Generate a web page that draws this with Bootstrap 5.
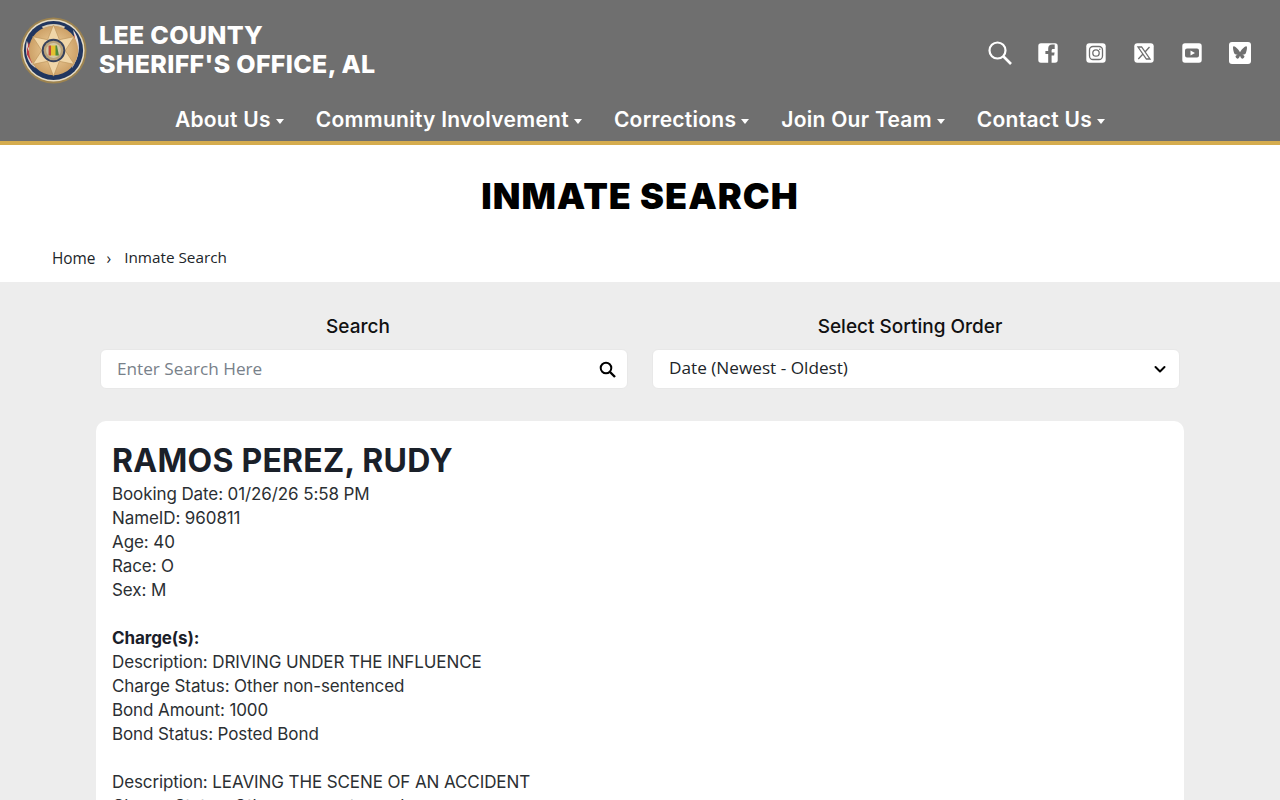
<!DOCTYPE html>
<html lang="en"><head><meta charset="utf-8"><title>Inmate Search</title>
<link href="https://cdn.jsdelivr.net/npm/bootstrap@5.3.0/dist/css/bootstrap.min.css" rel="stylesheet">
<style>
html,body{height:800px;overflow:hidden}
body{background:#ededed;font-family:Inter,"Liberation Sans",sans-serif;color:#212529}
.site-head{background:#6f6f6f;border-bottom:4px solid #d5ac4e;height:145px;padding:16px 28px 0 20px}
.seal{width:67px;height:67px;flex:none;margin:.5px 0}
.brand-txt{font-size:25px;line-height:29px;font-weight:800;color:#fff;letter-spacing:.3px;margin-left:12px;margin-bottom:1px;white-space:nowrap}
.icon-row{gap:24px;margin-top:25px}
.ico{width:24px;height:24px;display:block}
.menu{gap:32px;margin-top:19px;margin-right:-8px}
.menu a{color:#fff;text-decoration:none;font-size:21px;font-weight:600;line-height:34px;letter-spacing:.27px;white-space:nowrap}
.menu a::after{content:"";display:inline-block;margin-left:5px;vertical-align:3px;border-left:4px solid transparent;border-right:4px solid transparent;border-top:5px solid #fff}
.title-band{background:#fff;height:137px;padding-top:29px}
.page-title{font-size:36px;line-height:44px;font-weight:900;color:#000;margin:0;letter-spacing:1px}
.crumbs{padding:0 52px;margin-top:31px;font-family:"Open Sans",sans-serif;font-size:15.4px;line-height:20px;color:#212529}
.crumbs .sep{margin:0 13px 0 11px}
.crumbs .cur{margin-top:-2px;font-size:15.3px}
.filters{width:1080px;margin:0 auto;padding-top:33px;gap:24px}
.filter-col{width:528px}
.filter-lbl{font-size:19px;line-height:24px;font-weight:500;color:#111;text-align:center;margin-bottom:10px;padding-right:12px}
.field-box{height:40px;background:#fff;border:1px solid #e8e8e8;border-radius:6px;padding:0 11px 0 16px;font-family:"Open Sans",sans-serif;font-size:17.2px;color:#212529}
.field-box input{border:0;outline:0;background:transparent;flex:1;min-width:0;font:inherit;padding:0}
.field-box input::placeholder{color:#78818a}
.field-box span{padding-bottom:2px}
.rec{width:1088px;margin:32px auto 0;border-radius:10px;background:#fff;padding:21px 16px 16px;height:600px}
.rec h2{font-size:32px;line-height:38px;font-weight:700;color:#1a2029;margin:0 0 2px;letter-spacing:.25px}
.rec p{font-size:17px;line-height:24px;margin:0;letter-spacing:-.1px;color:#2b2f33}
.rec p b{font-weight:700;color:#1a2029}
</style></head>
<body>
<header class="site-head">
<div class="d-flex justify-content-between align-items-start">
<div class="d-flex align-items-center">
<svg class="seal" viewBox="0 0 68 68"><defs><radialGradient id="g" cx=".5" cy=".5" r=".5"><stop offset="0" stop-color="#f3d6a4"/><stop offset="1" stop-color="#cda167"/></radialGradient></defs>
<circle cx="34" cy="34" r="33.500" fill="#9d834f"/><circle cx="34" cy="34" r="31.500" fill="#e6dcc4"/><circle cx="34" cy="34" r="30" fill="#21365f"/>
<path d="M7 24c-2 9-1 17 4 24l5 4-4-10-2-9z" fill="#d9d0c8"/><path d="M7 30l6 14-1 3-5-9zM9 25l4 10v3l-5-8z" fill="#bd3b45"/>
<path d="M54 13c6 8 8 20 3 31l-4 8 1-12 2-14z" fill="#e9e0da"/><path d="M55 17l2 11-3 11-1 9-1-10 2-10zM58 26l-1 13-2 6 2-14z" fill="#c23e48"/>
<path d="M16 50c7 8 28 9 36 0l-3-2c-7 6-23 6-30 0z" fill="#e7dfcf"/><path d="M22 10c7-4 17-4 24 0l-2 2c-6-3-14-3-20 0z" fill="#d9cfb8"/>
<circle cx="34" cy="34" r="25" fill="url(#g)"/>
<path d="M34 8l6 15 15-3-9 14 9 14-15-3-6 15-6-15-15 3 9-14-9-14 15 3z" fill="#f0d6a8" stroke="#bf975f" stroke-width=".7"/>
<circle cx="34" cy="34" r="12" fill="#37425c"/><circle cx="34" cy="34" r="10" fill="#b9a27a"/><circle cx="34" cy="34" r="7.500" fill="#d4c9a6"/><path d="M30 29h7l2 10h-9z" fill="#e5c22f"/><path d="M36 29h1.500l2 10H36z" fill="#4d8a3c"/><path d="M29 29h2.500v10H29z" fill="#c04a3c"/>
</svg>
<div class="brand-txt">LEE COUNTY<br>SHERIFF'S OFFICE, AL</div>
</div>
<div class="d-flex icon-row">
<svg class="ico" viewBox="0 0 24 24" fill="none" stroke="#fff"><circle cx="9.500" cy="9.500" r="8" stroke-width="2.200"/><path d="M15.500 15.500l7.500 7.500" stroke-width="2.600"/></svg>
<svg class="ico" viewBox="0 0 24 24"><path fill="#fff" fill-rule="evenodd" d="M5 2.300h14a2.700 2.700 0 0 1 2.700 2.700v14a2.700 2.700 0 0 1-2.700 2.700h-3.400v-7.200h2.500l.5-3h-3v-1.900c0-.9.4-1.500 1.600-1.500h1.500V3.600s-1.300-.2-2.500-.2c-2.500 0-4 1.500-4 4.100v2.500h-2.800v3h2.800v8.700H5A2.700 2.700 0 0 1 2.300 19V5A2.700 2.700 0 0 1 5 2.300z"/></svg>
<svg class="ico" viewBox="0 0 24 24"><rect x="2.300" y="2.300" width="19.400" height="19.400" rx="3" fill="#fff"/><rect x="5.500" y="5.500" width="13" height="13" rx="3.500" fill="none" stroke="#6f6f6f" stroke-width="1.300"/><circle cx="12" cy="12" r="3.200" fill="none" stroke="#6f6f6f" stroke-width="1.300"/><circle cx="15.800" cy="8.200" r=".8" fill="#6f6f6f"/></svg>
<svg class="ico" viewBox="0 0 24 24"><rect x="2.300" y="2.300" width="19.400" height="19.400" rx="3" fill="#fff"/><path d="M6 6h3.600l8.400 12h-3.600zM17.500 6l-4.700 5.300M11 13l-4.700 5" fill="none" stroke="#6f6f6f" stroke-width="1.300"/></svg>
<svg class="ico" viewBox="0 0 24 24"><path fill="#fff" fill-rule="evenodd" d="M5 2.300h14A2.700 2.700 0 0 1 21.700 5v14a2.700 2.700 0 0 1-2.700 2.700H5A2.700 2.700 0 0 1 2.300 19V5A2.700 2.700 0 0 1 5 2.300zM7 7.500a2 2 0 0 0-2 2v5a2 2 0 0 0 2 2h10a2 2 0 0 0 2-2v-5a2 2 0 0 0-2-2zM10.500 9.500l4.500 2.500-4.500 2.500z"/></svg>
<svg class="ico" viewBox="0 0 24 24"><rect x="1" y="1" width="22" height="22" rx="3" fill="#fff"/><path fill="#6f6f6f" d="M12 11.200c-.7-1.400-2.700-4-4.500-5.300C5.800 4.700 5 5 5 6.800c0 1.400.7 4.100 1 5 .6 1.800 2.300 2.100 3.800 1.900-2.300.4-2.900 1.700-1.700 3 2.400 2.500 3.400-.6 3.900-1.900.5 1.300 1.500 4.400 3.900 1.900 1.200-1.300.6-2.600-1.700-3 1.500.2 3.200-.1 3.800-1.900.3-.9 1-3.600 1-5 0-1.800-.8-2.100-2.500-.9-1.800 1.300-3.800 3.900-4.500 5.300z"/></svg>
</div>
</div>
<nav class="d-flex justify-content-center menu">
<a href="#">About Us</a><a href="#">Community Involvement</a><a href="#">Corrections</a><a href="#">Join Our Team</a><a href="#">Contact Us</a>
</nav>
</header>
<section class="title-band">
<h1 class="page-title text-center">INMATE SEARCH</h1>
<div class="crumbs d-flex"><span>Home</span><span class="sep">›</span><span class="cur">Inmate Search</span></div>
</section>
<div class="filters d-flex">
<div class="filter-col"><div class="filter-lbl">Search</div>
<div class="field-box d-flex align-items-center"><input type="text" placeholder="Enter Search Here" aria-label="Search">
<svg width="17" height="17" viewBox="0 0 17 17" fill="none" stroke="#000"><circle cx="7" cy="7" r="5.300" stroke-width="2"/><path d="M11 11l5 5" stroke-width="2.400"/></svg></div></div>
<div class="filter-col"><div class="filter-lbl">Select Sorting Order</div>
<div class="field-box d-flex align-items-center justify-content-between"><span>Date (Newest - Oldest)</span>
<svg width="16" height="16" viewBox="0 0 16 16" fill="none" stroke="#000" stroke-width="2" stroke-linecap="round" stroke-linejoin="round"><path d="M3.500 6l4.500 4.500L12.500 6"/></svg></div></div>
</div>
<article class="rec">
<h2>RAMOS PEREZ, RUDY</h2>
<p>Booking Date: 01/26/26 5:58 PM<br>NameID: 960811<br>Age: 40<br>Race: O<br>Sex: M<br><br><b>Charge(s):</b><br>Description: DRIVING UNDER THE INFLUENCE<br>Charge Status: Other non-sentenced<br>Bond Amount: 1000<br>Bond Status: Posted Bond<br><br>Description: LEAVING THE SCENE OF AN ACCIDENT<br>Charge Status: Other non-sentenced</p>
</article>
</body></html>
